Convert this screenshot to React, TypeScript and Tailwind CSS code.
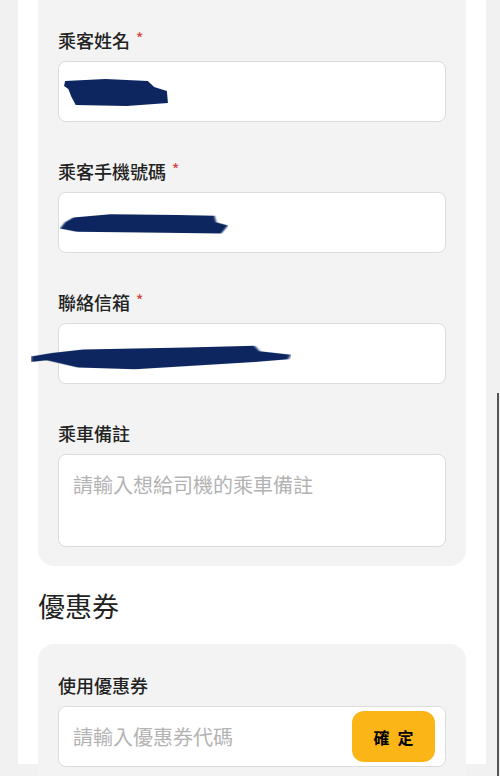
import React from "react";

const font = { fontFamily: '"Noto Sans CJK TC", "Noto Sans", sans-serif' };

function Label({ text, required }: { text: string; required?: boolean }) {
    return (
        <div className="flex items-start h-6 mb-[9px] text-[18px] leading-6 font-medium text-[#222]">
            <span>{text}</span>
            {required && <span className="ml-[6px] text-[15px] leading-5 text-[#d8453a]">*</span>}
        </div>
    );
}

// redaction scribble drawn over the filled-in value
function Scribble({ className, d }: { className: string; d: string }) {
    return (
        <svg className={className} viewBox="0 0 100 30" preserveAspectRatio="none">
            <defs>
                <filter id="soft" x="-5%" y="-20%" width="110%" height="140%">
                    <feGaussianBlur stdDeviation="0.6" />
                </filter>
            </defs>
            <path d={d} fill="#0c2660" filter="url(#soft)" />
        </svg>
    );
}

export default function App() {
    return (
        <main style={font} className="relative w-full h-[776px] overflow-hidden bg-[#f1f1f1]">
            <div className="ml-[18px] w-[468px] h-full bg-white px-5">
                {/* Passenger info card */}
                <section className="mt-[-12px] rounded-2xl bg-[#f3f3f3] px-5 pt-10 pb-[19px]">
                    <div className="flex flex-col gap-[37px]">
                        <div>
                            <Label text="乘客姓名" required />
                            <div className="relative h-[61px] rounded-lg border border-[#dcdcdc] bg-white">
                                <Scribble
                                    className="absolute left-[4px] top-[15px] w-[106px] h-[30px]"
                                    d="M2 4 L40 2 L80 4 L86 10 L98 14 L99 26 L60 29 L12 28 L8 20 L5 12 L1 9 Z"
                                />
                            </div>
                        </div>
                        <div>
                            <Label text="乘客手機號碼" required />
                            <div className="relative h-[61px] rounded-lg border border-[#dcdcdc] bg-white">
                                <Scribble
                                    className="absolute left-[1px] top-[18px] w-[168px] h-[24px]"
                                    d="M8 8 L30 4 L70 5 L92 6 L93 14 L100 18 L96 28 L50 27 L10 26 L0 22 L3 14 Z"
                                />
                            </div>
                        </div>
                        <div>
                            <Label text="聯絡信箱" required />
                            <div className="relative h-[61px] rounded-lg border border-[#dcdcdc] bg-white">
                                <Scribble
                                    className="absolute left-[-28px] top-[20px] w-[260px] h-[27px]"
                                    d="M0 14 L8 10 L20 6 L60 4 L86 2 L88 8 L100 12 L99 17 L86 20 L40 28 L18 26 L6 18 L0 20 Z"
                                />
                            </div>
                        </div>
                        <div>
                            <Label text="乘車備註" />
                            <textarea
                                placeholder="請輸入想給司機的乘車備註"
                                style={font}
                                className="block w-full h-[93px] resize-none rounded-lg border border-[#dcdcdc] bg-white px-[14px] py-[16px] text-[20px] leading-7 text-[#222] placeholder:text-[#b3b3b3] outline-none"
                            />
                        </div>
                    </div>
                </section>

                {/* Coupon */}
                <h2 className="mt-[22px] mb-[20px] text-[27px] leading-9 font-normal text-[#222]">優惠券</h2>
                <section className="rounded-2xl bg-[#f3f3f3] px-5 pt-[29px] pb-10">
                    <Label text="使用優惠券" />
                    <div className="flex items-center h-[61px] rounded-lg border border-[#dcdcdc] bg-white pl-[14px] pr-[10px]">
                        <input
                            placeholder="請輸入優惠券代碼"
                            style={font}
                            className="flex-1 min-w-0 bg-transparent text-[20px] text-[#222] placeholder:text-[#b3b3b3] outline-none"
                        />
                        <button className="h-[51px] w-[83px] rounded-xl bg-[#fbb517] pl-[8px] text-[16px] font-bold tracking-[8px] text-black">
                            確定
                        </button>
                    </div>
                </section>
            </div>

            {/* scroll indicator */}
            <div className="absolute right-[1px] top-[393px] h-[383px] w-[2px] bg-[#555]" />
        </main>
    );
}
